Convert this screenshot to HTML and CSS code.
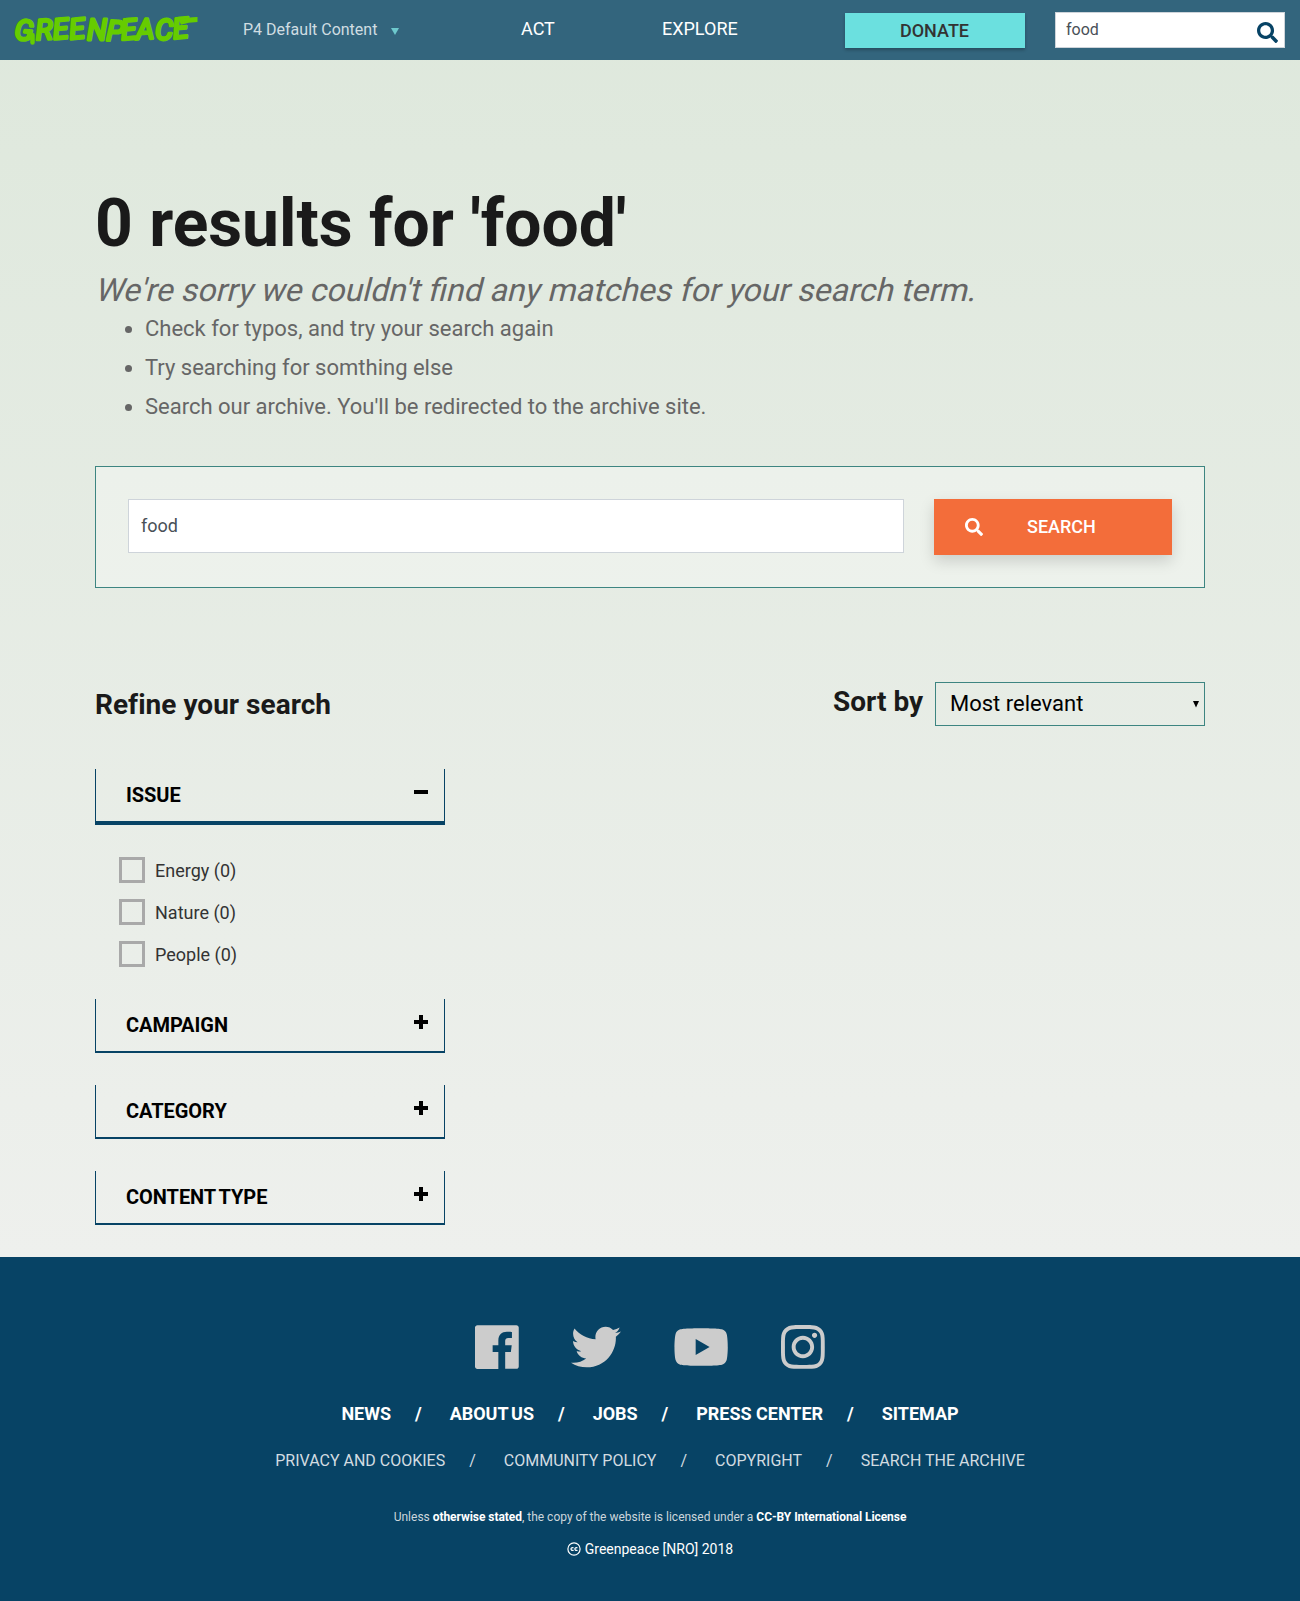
FILE: index.html
```html
<!DOCTYPE html>
<html lang="en">
<head>
<meta charset="utf-8">
<title>Search results - Greenpeace</title>
<link rel="stylesheet" href="styles.css">
</head>
<body>
<header class="topbar">
  <a class="logo" aria-label="Greenpeace">
    <svg width="192" height="50" viewBox="0 -8 192 50">
      <text class="logo-word" y="26.5 27 26.5 26.5 26.5 27.5 27 26.5 26.5 26" x="0 22 39.5 56 73 92 107.5 122.5 141 159.5" rotate="4 -3 -5 -6 0 3 -5 -3 0 -6">GREENPEACE</text>
      <path class="logo-drop" d="M18.5 22V29.5"/>
      <path class="logo-tail" d="M166 9.5Q174 6.5 183.5 6.5"/>
    </svg>
  </a>
  <a class="site-name">P4 Default Content<span class="site-arrow"></span></a>
  <nav class="main-nav"><a class="nav-act">ACT</a><a>EXPLORE</a></nav>
  <a class="donate">DONATE</a>
  <form class="top-search">
    <span>food</span>
    <svg class="top-search-icon" viewBox="0 0 512 512"><path d="M505 442.7L405.3 343c-4.5-4.5-10.6-7-17-7H372c27.6-35.3 44-79.7 44-128C416 93.1 322.9 0 208 0S0 93.1 0 208s93.1 208 208 208c48.3 0 92.7-16.4 128-44v16.3c0 6.4 2.5 12.5 7 17l99.7 99.7c9.4 9.4 24.6 9.4 33.9 0l28.3-28.3c9.4-9.4 9.4-24.6.1-34zM208 336c-70.7 0-128-57.2-128-128 0-70.7 57.2-128 128-128 70.7 0 128 57.2 128 128 0 70.7-57.2 128-128 128z"/></svg>
  </form>
</header>

<main class="container">
  <h1>0 results for 'food'</h1>
  <p class="sorry">We're sorry we couldn't find any matches for your search term.</p>
  <ul class="tips">
    <li>Check for typos, and try your search again</li>
    <li>Try searching for somthing else</li>
    <li>Search our archive. You'll be redirected to the archive site.</li>
  </ul>

  <form class="search-box">
    <div class="search-input">food</div>
    <div class="search-button">
      <svg viewBox="0 0 512 512"><path d="M505 442.7L405.3 343c-4.5-4.5-10.6-7-17-7H372c27.6-35.3 44-79.7 44-128C416 93.1 322.9 0 208 0S0 93.1 0 208s93.1 208 208 208c48.3 0 92.7-16.4 128-44v16.3c0 6.4 2.5 12.5 7 17l99.7 99.7c9.4 9.4 24.6 9.4 33.9 0l28.3-28.3c9.4-9.4 9.4-24.6.1-34zM208 336c-70.7 0-128-57.2-128-128 0-70.7 57.2-128 128-128 70.7 0 128 57.2 128 128 0 70.7-57.2 128-128 128z"/></svg>
      <span>SEARCH</span>
    </div>
  </form>

  <div class="refine-row">
    <h2 class="refine-title">Refine your search</h2>
    <h2 class="sort-title">Sort by</h2>
    <div class="sort-select"><span>Most relevant</span><svg width="6" height="7" viewBox="0 0 6 7"><path d="M0 0h6L3 6.5z"/></svg></div>
  </div>

  <aside class="filters">
    <div class="filter-head open">ISSUE<span class="sign minus"></span></div>
    <div class="filter-list">
      <label><span class="check"></span>Energy (0)</label>
      <label><span class="check"></span>Nature (0)</label>
      <label><span class="check"></span>People (0)</label>
    </div>
    <div class="filter-head">CAMPAIGN<span class="sign plus"></span></div>
    <div class="filter-head">CATEGORY<span class="sign plus"></span></div>
    <div class="filter-head">CONTENT TYPE<span class="sign plus"></span></div>
  </aside>
</main>

<footer class="footer">
  <div class="social">
    <svg width="43.75" height="50" viewBox="0 0 448 512"><path d="M448 56.7v398.5c0 13.7-11.1 24.7-24.7 24.7H309.1V306.5h58.2l8.7-67.6h-67v-43.2c0-19.6 5.4-32.9 33.5-32.9h35.8v-60.5c-6.2-.8-27.4-2.7-52.2-2.7-51.6 0-87 31.5-87 89.4v49.9h-58.4v67.6h58.4V480H24.7C11.1 480 0 468.9 0 455.3V56.7C0 43.1 11.1 32 24.7 32h398.5c13.7 0 24.8 11.1 24.8 24.7z"/></svg>
    <svg width="50" height="50" viewBox="0 0 512 512"><path d="M459.37 151.716c.325 4.548.325 9.097.325 13.645 0 138.72-105.583 298.558-298.558 298.558-59.452 0-114.68-17.219-161.137-47.106 8.447.974 16.568 1.299 25.34 1.299 49.055 0 94.213-16.568 130.274-44.832-46.132-.975-84.792-31.188-98.112-72.772 6.498.974 12.995 1.624 19.818 1.624 9.421 0 18.843-1.3 27.614-3.573-48.081-9.747-84.143-51.98-84.143-102.985v-1.299c13.969 7.797 30.214 12.67 47.431 13.319-28.264-18.843-46.781-51.005-46.781-87.391 0-19.492 5.197-37.36 14.294-52.954 51.655 63.675 129.3 105.258 216.365 109.807-1.624-7.797-2.599-15.918-2.599-24.04 0-57.828 46.782-104.934 104.934-104.934 30.213 0 57.502 12.67 76.67 33.137 23.715-4.548 46.456-13.32 66.599-25.34-7.798 24.366-24.366 44.833-46.132 57.827 21.117-2.273 41.584-8.122 60.426-16.243-14.292 20.791-32.161 39.308-52.628 54.253z"/></svg>
    <svg width="56.25" height="50" viewBox="0 0 576 512"><path d="M549.655 124.083c-6.281-23.65-24.787-42.276-48.284-48.597C458.781 64 288 64 288 64S117.22 64 74.629 75.486c-23.497 6.322-42.003 24.947-48.284 48.597-11.412 42.867-11.412 132.305-11.412 132.305s0 89.438 11.412 132.305c6.281 23.65 24.787 41.5 48.284 47.821C117.22 448 288 448 288 448s170.78 0 213.371-11.486c23.497-6.321 42.003-24.171 48.284-47.821 11.412-42.867 11.412-132.305 11.412-132.305s0-89.438-11.412-132.305zm-317.51 213.508V175.185l142.739 81.205-142.739 81.201z"/></svg>
    <svg width="43.75" height="50" viewBox="0 0 448 512"><path d="M224.1 141c-63.6 0-114.9 51.3-114.9 114.9s51.3 114.9 114.9 114.9S339 319.5 339 255.9 287.7 141 224.1 141zm0 189.6c-41.1 0-74.7-33.5-74.7-74.7s33.5-74.7 74.7-74.7 74.7 33.5 74.7 74.7-33.6 74.7-74.7 74.7zm146.4-194.3c0 14.9-12 26.8-26.8 26.8-14.9 0-26.8-12-26.8-26.8s12-26.8 26.8-26.8 26.8 12 26.8 26.8zm76.1 27.2c-1.7-35.9-9.9-67.7-36.2-93.9-26.2-26.2-58-34.4-93.9-36.2-37-2.1-147.9-2.1-184.9 0-35.8 1.7-67.6 9.9-93.9 36.1s-34.4 58-36.2 93.9c-2.1 37-2.1 147.9 0 184.9 1.7 35.9 9.9 67.7 36.2 93.9s58 34.4 93.9 36.2c37 2.1 147.9 2.1 184.9 0 35.9-1.7 67.7-9.9 93.9-36.2 26.2-26.2 34.4-58 36.2-93.9 2.1-37 2.1-147.8 0-184.8zM398.8 388c-7.8 19.6-22.9 34.7-42.6 42.6-29.5 11.7-99.5 9-132.1 9s-102.7 2.6-132.1-9c-19.6-7.8-34.7-22.9-42.6-42.6-11.7-29.5-9-99.5-9-132.1s-2.6-102.7 9-132.1c7.8-19.6 22.9-34.7 42.6-42.6 29.5-11.7 99.5-9 132.1-9s102.7-2.6 132.1 9c19.6 7.8 34.7 22.9 42.6 42.6 11.7 29.5 9 99.5 9 132.1s2.7 102.7-9 132.1z"/></svg>
  </div>
  <ul class="links primary"><li>NEWS</li><li>ABOUT US</li><li>JOBS</li><li>PRESS CENTER</li><li>SITEMAP</li></ul>
  <ul class="links secondary"><li>PRIVACY AND COOKIES</li><li>COMMUNITY POLICY</li><li>COPYRIGHT</li><li>SEARCH THE ARCHIVE</li></ul>
  <p class="license">Unless <b>otherwise stated</b>, the copy of the website is licensed under a <b>CC-BY International License</b></p>
  <p class="copyright"><svg width="14" height="14" viewBox="0 0 14 14"><circle cx="7" cy="7" r="6.1"/><path d="M6.5 6A1.45 1.45 0 1 0 6.5 8M10.4 6A1.45 1.45 0 1 0 10.4 8"/></svg>Greenpeace [NRO] 2018</p>
</footer>
</body>
</html>
```
FILE: styles.css
```css
* { box-sizing: border-box; }
body {
  margin: 0;
  font-family: Roboto, "Liberation Sans", sans-serif;
  color: #1a1a1a;
  background: linear-gradient(#dee8dc, #eef0ed 1257px);
}
h1, h2, p, ul { margin: 0; padding: 0; }

.topbar {
  height: 60px;
  display: flex;
  align-items: center;
  background: rgba(7, 67, 101, .8);
}
.logo { width: 192px; height: 50px; margin-left: 14px; }
.logo svg { display: block; }
.logo-word {
  font: italic 400 28.5px Roboto, sans-serif;
  fill: #6c0;
  stroke: #6c0;
  stroke-width: 2.8;
  stroke-linejoin: round;
}
.logo-drop { fill: none; stroke: #6c0; stroke-width: 4.5; stroke-linecap: round; }
.logo-tail { fill: none; stroke: #6c0; stroke-width: 5; }
.site-name {
  width: 278px;
  margin-left: 37px;
  padding-bottom: 2px;
  display: flex;
  align-items: center;
  font-size: 16px;
  color: #d0dde2;
}
.site-arrow {
  margin: 5px 0 0 14px;
  border: 4px solid transparent;
  border-top: 7px solid #6ec9cd;
  border-bottom: 0;
}
.main-nav { width: 324px; display: flex; font-size: 18px; color: #fff; line-height: 22px; padding-bottom: 2px; }
.nav-act { width: 141px; }
.donate {
  width: 180px;
  height: 35px;
  margin-top: 1px;
  padding-right: 1px;
  background: #6be0df;
  box-shadow: 0 2px 3px rgba(0, 0, 0, .25);
  color: #333;
  font-size: 18px;
  font-weight: 500;
  line-height: 35px;
  text-align: center;
}
.top-search {
  width: 230px;
  height: 36px;
  margin-left: 30px;
  padding: 0 6px 0 10px;
  display: flex;
  align-items: center;
  justify-content: space-between;
  background: #fff;
  border: 1px solid #ced4da;
  color: #495057;
  font-size: 16px;
}
.top-search span { padding-bottom: 2px; }
.top-search-icon { width: 21px; height: 21px; margin-top: 4px; fill: #074365; }

.container { width: 1110px; height: 1197px; margin: 0 auto; padding-top: 124px; }
h1 { font-size: 66px; line-height: 79px; margin-bottom: 8px; letter-spacing: -.05px; }
/* slanted upright face rather than the true italic */
.sorry {
  font-size: 32px;
  line-height: 38px;
  color: #666;
  transform: translateX(-.5px) skewX(-14deg);
  transform-origin: 0 30px;
}
.tips { padding-left: 50px; margin-bottom: 40px; font-size: 22px; line-height: 39px; color: #666; }

.search-box {
  height: 122px;
  padding: 32px;
  display: flex;
  gap: 30px;
  background: rgba(255, 255, 255, .3);
  border: 1px solid #3d8581;
}
.search-input {
  width: 776px;
  height: 54px;
  padding-left: 12px;
  background: #fff;
  border: 1px solid #ced4da;
  color: #495057;
  font-size: 18px;
  line-height: 51px;
}
.search-button {
  width: 238px;
  height: 56px;
  padding-left: 31px;
  display: flex;
  align-items: center;
  gap: 44px;
  background: #f36d3a;
  box-shadow: 0 6px 14px rgba(0, 0, 0, .15);
  color: #fff;
  font-size: 18px;
  font-weight: 500;
}
.search-button span { padding-bottom: 2px; }
.search-button svg { width: 18px; height: 18px; fill: #fff; }

.refine-row { display: flex; height: 44px; margin-top: 94px; }
.refine-row h2 { font-size: 28px; font-weight: 700; }
.refine-title { flex: 1; line-height: 45px; letter-spacing: .02px; }
.sort-title { width: 102px; line-height: 40px; }
.sort-select {
  width: 270px;
  padding: 0 5px 0 14px;
  display: flex;
  align-items: center;
  justify-content: space-between;
  border: 1px solid #3d8581;
  color: #000;
  font-size: 22px;
}
.sort-select span { padding-bottom: 2px; }

.filters { width: 350px; margin-top: 43px; }
.filter-head {
  height: 54px;
  margin-bottom: 32px;
  padding: 0 16px 0 30px;
  display: flex;
  justify-content: space-between;
  border: solid #074365;
  border-width: 0 1px 2px;
  color: #000;
  font-size: 20px;
  font-weight: 700;
  line-height: 53px;
  letter-spacing: -.05px;
  word-spacing: -1.6px;
}
.filter-head.open { height: 56px; border-bottom-width: 4px; }
.sign { width: 14px; height: 14px; margin-top: 16px; }
.minus { background: linear-gradient(#000, #000) center / 14px 4px no-repeat; }
.plus {
  background: linear-gradient(#000, #000) center / 14px 4px no-repeat,
    linear-gradient(#000, #000) center / 4px 14px no-repeat;
}
.filter-list { padding-left: 24px; margin-bottom: 32px; display: grid; gap: 16px; }
.filter-list label { height: 26px; display: flex; gap: 10px; font-size: 18px; line-height: 28px; color: #333; }
.check { width: 26px; height: 26px; border: 3px solid #a9a9a9; }

.footer {
  height: 344px;
  padding-top: 65px;
  background: #074365;
  color: #fff;
  text-align: center;
}
.social { height: 50px; display: flex; justify-content: center; gap: 52px; fill: #ccc; }
.links { display: flex; justify-content: center; list-style: none; }
.links li + li::before { content: "/"; display: inline-block; margin: 0 28px 0 24px; }
.primary { margin-top: 31px; font-size: 18px; font-weight: 700; line-height: 22px; letter-spacing: -.02px; }
.primary li:nth-child(2) { word-spacing: -1.5px; }
.secondary { margin-top: 26px; font-size: 16px; line-height: 20px; color: #d3dce1; }
.license { margin-top: 37px; font-size: 12px; line-height: 18px; color: #ccd6dc; }
.license b { color: #fff; letter-spacing: -.06px; }
.copyright { margin-top: 13px; display: flex; justify-content: center; align-items: center; gap: 4px; font-size: 14px; line-height: 20px; }
.copyright svg { fill: none; stroke: #fff; stroke-width: 1.2; }
```
